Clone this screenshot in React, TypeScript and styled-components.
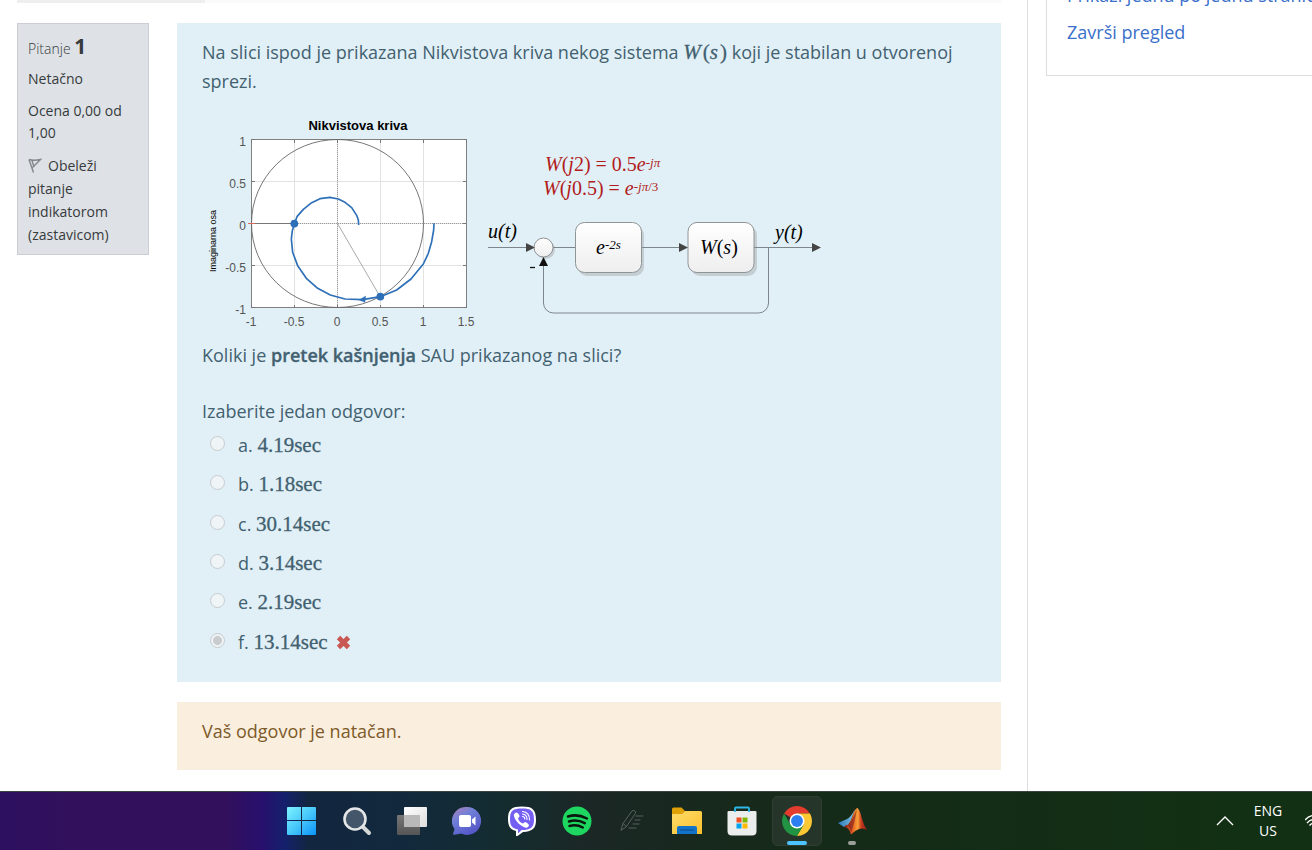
import React from "react";
import styled, { createGlobalStyle } from "styled-components";

const GlobalStyle = createGlobalStyle`
  *, *::before, *::after { box-sizing: border-box; }
  body { margin: 0; background: #fff; }
`;

const sans = `"Open Sans", "Noto Sans", sans-serif`;

const Screen = styled.div`
  display: flex;
  flex-direction: column;
  height: 100vh;
  overflow: hidden;
  font-family: ${sans};
  font-size: 18px;
  line-height: 29px;
`;

const Page = styled.div`
  display: flex;
  flex: 1;
  min-height: 0;
  overflow: hidden;
`;

const Main = styled.main`
  flex: 1;
  min-width: 0;
  padding: 0 26px 0 17px;
`;

const ProgressStrip = styled.div`
  display: flex;
  height: 3px;
  margin-bottom: 20px;
  background: #fafafa;
`;

const ProgressPart = styled.div`
  width: 188px;
  background: #eee;
`;

const Question = styled.section`
  display: flex;
  align-items: flex-start;
  gap: 28px;
`;

const Info = styled.aside`
  flex: none;
  width: 132px;
  padding: 11px 10px 8px;
  border: 1px solid #cacdd3;
  background: #dee2e6;
  color: #373a3c;
  font-size: 14px;
  line-height: 23px;
`;

const InfoTitle = styled.h3`
  margin: 0 0 8px;
  font-size: 14px;
  font-weight: 300;
  line-height: 23px;
`;

const InfoNumber = styled.span`
  font-size: 21px;
  font-weight: 700;
`;

const InfoText = styled.p`
  margin: 0 0 10px;
  line-height: 22px;
`;

const FlagLink = styled.a`
  color: inherit;
  text-decoration: none;

  svg { margin-right: 6px; vertical-align: -2px; }
`;

const Content = styled.div`
  flex: 1;
  min-width: 0;
`;

const Formulation = styled.form`
  margin-bottom: 20px;
  padding: 15px 25px 20px;
  background: #e1f0f7;
  color: #426170;
`;

const Paragraph = styled.p`
  margin: 0;
`;

const Strong = styled.b`
  font-weight: 600;
  -webkit-text-stroke: 0.3px currentColor;
`;

const Figure = styled.figure`
  margin: 19px 0 11px;
  svg { display: block; }
`;

const Answers = styled.fieldset`
  margin: 27px 0 0;
  padding: 0;
  border: 0;
`;

const Prompt = styled.legend`
  padding: 0;
`;

const AnswerList = styled.div`
  display: grid;
  grid-auto-rows: 1fr;
  min-height: 236px;
`;

const Answer = styled.label`
  display: flex;
  align-items: center;
  padding-left: 8px;
  white-space: pre;
  svg { margin-left: 8px; }
`;

const Radio = styled.input`
  appearance: none;
  width: 15px;
  height: 15px;
  margin: 0 13px 4px 0;
  border: 1px solid #c6cbce;
  border-radius: 50%;
  background: #eff4f7;

  &:checked {
    background: radial-gradient(circle, #c8cccf 0 4px, #eff4f7 5px);
  }
`;

const Digits = styled.span`
  font-family: "Liberation Serif", serif;
  font-size: 21px;
  -webkit-text-stroke: 0.3px currentColor;
`;

const MathText = styled.span`
  font-family: "Liberation Serif", serif;
  font-size: 21px;
  line-height: 1;
  -webkit-text-stroke: 0.3px currentColor;

  i { margin-right: 2px; }
`;

const Feedback = styled.div`
  min-height: 68px;
  padding: 15px 25px;
  background: #faeede;
  color: #7d5a29;
`;

const Side = styled.aside`
  flex: none;
  width: 285px;
  padding-left: 18px;
  overflow: hidden;
  border-left: 1px solid #dcdddf;
`;

const SideBlock = styled.nav`
  display: flex;
  flex-direction: column;
  gap: 8px;
  width: 300px;
  margin-top: -41px;
  padding: 21px 20px 28px;
  border: 1px solid #dcdddf;
  white-space: nowrap;
`;

const SideLink = styled.a`
  color: #3a6fca;
  text-decoration: none;
`;

const Taskbar = styled.footer`
  display: flex;
  flex: none;
  align-items: center;
  justify-content: space-between;
  height: 59px;
  padding-left: 277px;
  border-top: 1px solid #3c463f;
  background: linear-gradient(
    to right,
    #2d1060 0, #32105c 80px, #32105c 225px, #28106e 262px, #14206c 285px,
    #12263f 308px, #12293d 400px, #142c30 500px, #1b2725 590px,
    #17291c 720px, #142c17 900px, #123013 1250px
  );
`;

const Apps = styled.div`
  display: flex;
  gap: 5px;
`;

const AppButton = styled.button<{ $active?: boolean }>`
  display: grid;
  place-items: center;
  position: relative;
  width: 50px;
  height: 50px;
  padding: 0;
  border: 1px solid ${(p) => (p.$active ? "#2f3d31" : "transparent")};
  border-radius: 5px;
  background: ${(p) => (p.$active ? "#263529" : "transparent")};
`;

const Indicator = styled.span<{ $wide?: boolean }>`
  position: absolute;
  bottom: 0;
  left: calc(50% - ${(p) => (p.$wide ? 10 : 4)}px);
  width: ${(p) => (p.$wide ? 20 : 8)}px;
  height: 4px;
  border-radius: 2px;
  background: ${(p) => (p.$wide ? "#4cc2ff" : "#9a9f98")};
`;

const Tray = styled.div`
  display: flex;
  align-items: center;
  color: #fff;
`;

const TrayButton = styled.button`
  display: grid;
  place-items: center;
  padding: 0;
  border: 0;
  background: none;
  color: inherit;
  font-family: ${sans};
  font-size: 14px;
  line-height: 20px;
`;

const Language = styled(TrayButton)`
  width: 34px;
  margin: 0 20px 0 17px;
`;

const Axis = styled.text`
  fill: #555;
  font-family: "Liberation Sans", sans-serif;
  font-size: 12px;
`;

const Formula = styled.text`
  font-family: "Liberation Serif", serif;
  font-size: 20px;
`;

const xTicks: [number, string][] = [[251, "-1"], [294, "-0.5"], [337, "0"], [380, "0.5"], [423, "1"], [466, "1.5"]];
const yTicks: [number, string][] = [[140, "1"], [182, "0.5"], [224, "0"], [266, "-0.5"], [308, "-1"]];

function Diagram() {
  return (
    <svg width="625" height="215" viewBox="202 115 625 215" role="img" aria-label="Nikvistova kriva i blok dijagram">
      <defs>
        <linearGradient id="block" x1="0" y1="0" x2="0" y2="1">
          <stop offset="0" stopColor="#fff" />
          <stop offset="1" stopColor="#eee" />
        </linearGradient>
      </defs>

      <text x="358" y="130" textAnchor="middle" fontFamily="Liberation Sans, sans-serif" fontSize="13" fontWeight="700">Nikvistova kriva</text>
      <text transform="translate(216 241) rotate(-90)" textAnchor="middle" fontFamily="Liberation Sans, sans-serif" fontSize="9">Imaginarna osa</text>
      <rect x="251.500" y="139.500" width="215" height="168" fill="#fff" />
      <g stroke="#e2e2e2">
        {xTicks.slice(1, 5).map(([x]) => <path key={x} d={`M${x + 0.5} 140V308`} />)}
        {yTicks.slice(1, 4).map(([y]) => <path key={y} d={`M252 ${y - 0.5}H466`} />)}
      </g>
      <g stroke="#999" strokeDasharray="1 1">
        <path d="M337.500 140V308" />
        <path d="M252 223.500H466" />
      </g>
      <rect x="251.500" y="139.500" width="215" height="168" fill="none" stroke="#808080" />
      <g stroke="#777">
        {xTicks.map(([x]) => <path key={x} d={`M${x + 0.5} 140v3M${x + 0.5} 308v-3`} />)}
        {yTicks.map(([y]) => <path key={y} d={`M252 ${y - 0.5}h3M466 ${y - 0.5}h-3`} />)}
      </g>
      <ellipse cx="337.500" cy="223.500" rx="86" ry="84" fill="none" stroke="#666" strokeWidth="0.9" />
      <path d="M252 223.500H294" stroke="#777" />
      <path d="M248 223.500h7" stroke="#e0685f" />
      <path d="M337.500 223.500L380 296.500" stroke="#aaa" />
      <g transform="translate(195 110) scale(0.33333)">
        <path
          d="M491 345L490 330L485 316L470 293L450 277L430 267L405 262L375 266L350 278L325 298L306 320L298 342L292 362L289 387L293 427L308 467L334 505L368 535L406 555L450 567L503 569L556 560L605 540L648 507L685 462L700 430L710 395L716 360L717 340"
          fill="none" stroke="#2e70b8" strokeWidth="5" strokeLinejoin="round"
        />
        <path d="M492 570L512 558L510 577Z" fill="#2e70b8" stroke="#2e70b8" />
        <circle cx="298" cy="341" r="11.500" fill="#2e70b8" />
        <circle cx="556" cy="560" r="11.500" fill="#2e70b8" />
      </g>
      {xTicks.map(([x, t]) => <Axis key={x} x={x} y="326" textAnchor="middle">{t}</Axis>)}
      {yTicks.map(([y, t]) => <Axis key={y} x="246" y={y + 6} textAnchor="end">{t}</Axis>)}

      <g fill="#b11c1c">
        <Formula x="545" y="171"><tspan fontStyle="italic">W</tspan>(<tspan fontStyle="italic">j</tspan>2) = 0.5<tspan fontStyle="italic">e</tspan><tspan fontStyle="italic" fontSize="13" dy="-4">-jπ</tspan></Formula>
        <Formula x="543" y="195"><tspan fontStyle="italic">W</tspan>(<tspan fontStyle="italic">j</tspan>0.5) = <tspan fontStyle="italic">e</tspan><tspan fontSize="13" dy="-4" fontStyle="italic">-jπ</tspan><tspan fontSize="13">/3</tspan></Formula>
      </g>

      <g fill="#c5ced3">
        <rect x="578" y="226" width="66" height="50" rx="9" />
        <rect x="691" y="226" width="66" height="50" rx="9" />
        <circle cx="545.500" cy="249.500" r="9.500" />
      </g>
      <g stroke="#7d868b" fill="none">
        <path d="M488 247.500H528M553 247.500H576M641 247.500H682M754 247.500H814" />
        <path d="M768.500 247.500V303a10 10 0 0 1-10 10H553.500a10 10 0 0 1-10-10V264" />
      </g>
      <g fill="url(#block)" stroke="#8f9497">
        <rect x="575.500" y="222.500" width="66" height="50" rx="9" />
        <rect x="688" y="222.500" width="66" height="50" rx="9" />
        <circle cx="543.500" cy="247.500" r="9.500" />
      </g>
      <g fill="#444">
        <path d="M526 243l9 4.500l-9 4.500ZM679 243l9 4.500l-9 4.500ZM812 243l9 4.500l-9 4.500Z" />
        <path d="M539 266l4.500-9l4.500 9Z" fill="#111" />
      </g>
      <path d="M530 267.500h5" stroke="#111" strokeWidth="1.300" />
      <Formula x="488" y="238" fontStyle="italic">u(t)</Formula>
      <Formula x="775" y="239" fontStyle="italic">y(t)</Formula>
      <Formula x="596" y="254" fontStyle="italic">e<tspan fontSize="13" dy="-5">-2s</tspan></Formula>
      <Formula x="700" y="254"><tspan fontStyle="italic">W</tspan>(<tspan fontStyle="italic">s</tspan>)</Formula>
    </svg>
  );
}

function StartIcon() {
  return (
    <svg width="30" height="30" viewBox="0 0 30 30" aria-hidden="true">
      <defs><linearGradient id="win" x1="0" y1="0" x2="1" y2="1"><stop stopColor="#7df4ff" /><stop offset="0.500" stopColor="#48c8fa" /><stop offset="1" stopColor="#0a93fa" /></linearGradient></defs>
      <path d="M1 1H14V14H0V2a1 1 0 0 1 1-1ZM15 1H28a1 1 0 0 1 1 1V14H15ZM0 15H14V29H1a1 1 0 0 1-1-1ZM15 15H29V28a1 1 0 0 1-1 1H15Z" fill="url(#win)" />
    </svg>
  );
}

function SearchIcon() {
  return (
    <svg width="30" height="30" viewBox="0 0 30 30" aria-hidden="true">
      <path d="M21 21L27 27" stroke="#d5d6d8" strokeWidth="4" strokeLinecap="round" />
      <circle cx="13" cy="13" r="10.500" fill="#44566a" stroke="#e5e6e7" strokeWidth="2.600" />
    </svg>
  );
}

function TaskViewIcon() {
  return (
    <svg width="32" height="30" viewBox="0 0 32 30" aria-hidden="true">
      <defs>
        <linearGradient id="tvb" x1="0" y1="0" x2="0" y2="1"><stop stopColor="#777" /><stop offset="1" stopColor="#555" /></linearGradient>
        <linearGradient id="tvf" x1="0" y1="0" x2="1" y2="1"><stop stopColor="#fff" /><stop offset="1" stopColor="#ddd" /></linearGradient>
      </defs>
      <rect x="1" y="9" width="23" height="20" rx="1" fill="url(#tvb)" />
      <rect x="8" y="1" width="23" height="20" rx="1" fill="url(#tvf)" />
      <path d="M8 9H24V21H8Z" fill="#b9b9b9" />
    </svg>
  );
}

function ChatIcon() {
  return (
    <svg width="30" height="30" viewBox="0 0 30 30" aria-hidden="true">
      <defs><linearGradient id="chat" x1="0" y1="0" x2="0.600" y2="1"><stop stopColor="#b481b4" /><stop offset="0.400" stopColor="#7080d8" /><stop offset="1" stopColor="#5457c8" /></linearGradient></defs>
      <path d="M15 1a14 14 0 1 1-6 26.600C6 28.500 3 29 1.500 28.700C.5 28.400 1.500 27 2.500 23A14 14 0 0 1 15 1Z" fill="url(#chat)" />
      <rect x="7" y="9" width="12" height="12" rx="2" fill="#fff" />
      <path d="M20 13.500L23.500 10.500V19.500L20 16.500Z" fill="#fff" />
    </svg>
  );
}

function ViberIcon() {
  return (
    <svg width="30" height="30" viewBox="0 0 30 30" aria-hidden="true">
      <path d="M15 .5C25 .5 29 3 29 14C29 22 26 25.500 16 26L10.500 30H9V25C3 23.500 1 20 1 13C1 3 5 .5 15 .5Z" fill="#fff" />
      <path d="M15 2.500C24 2.500 27 4.500 27 13.500C27 21.500 24 24 14.500 24L11 27.500V23.500C5 22.500 3 19.500 3 13C3 4.500 6 2.500 15 2.500Z" fill="#7360f2" />
      <path d="M9 6.500C11 6.300 12.800 9.500 12.500 10.500L11 12.500C11.800 15 13.500 16.800 16 17.500L18 16C20 16.300 22 18.300 22 19.500C21 21.500 19.500 22.200 18 21.500C12 19 8 14.500 6.800 9.500C6.800 8 8 7 9 6.500Z" fill="#fff" />
      <path d="M15.500 5.500Q22.500 6 22.500 14M15.500 8Q20 8.500 20 13.500M15.500 10.500Q17.800 10.800 17.800 13" fill="none" stroke="#fff" strokeWidth="1.100" strokeLinecap="round" />
    </svg>
  );
}

function SpotifyIcon() {
  return (
    <svg width="30" height="30" viewBox="0 0 30 30" aria-hidden="true">
      <circle cx="15" cy="15" r="14.500" fill="#1ed760" />
      <path d="M6 10.500Q15.500 7.500 25 12.500M7 15.500Q15 13 22.800 17.200M7.500 20Q14.500 18 20.800 21.500" fill="none" stroke="#0b160e" strokeWidth="2.500" strokeLinecap="round" />
    </svg>
  );
}

function PenIcon() {
  return (
    <svg width="26" height="24" viewBox="0 0 26 24" fill="none" stroke="#596060" strokeLinecap="round" strokeLinejoin="round" aria-hidden="true">
      <path d="M2 21L4 14.500L13 2Q14 .8 15.700 1.800Q17.200 3 16.300 4.500L7.500 17.500ZM4 14.500L7.500 17.500M17 7H24M16 11H21M14 15H20M10 19H17" />
    </svg>
  );
}

function FolderIcon() {
  return (
    <svg width="30" height="28" viewBox="0 0 30 28" aria-hidden="true">
      <defs><linearGradient id="folder" x1="0" y1="0" x2="1" y2="1"><stop stopColor="#ffdc6a" /><stop offset="1" stopColor="#fbc02d" /></linearGradient></defs>
      <path d="M0 2a1.500 1.500 0 0 1 1.500-1.500H9.500L13 4H28V9H0Z" fill="#e0a008" />
      <path d="M0 7H10L13.500 4H28.500A1.500 1.500 0 0 1 30 5.500V27H0Z" fill="url(#folder)" />
      <path d="M5 27V21a2 2 0 0 1 2-2H23a2 2 0 0 1 2 2V27Z" fill="#1273c8" />
      <path d="M8.500 23H21.500" stroke="#0b4d86" strokeLinecap="round" />
    </svg>
  );
}

function StoreIcon() {
  return (
    <svg width="30" height="30" viewBox="0 0 30 30" aria-hidden="true">
      <path d="M.5 6Q.5 5 2 5H28Q29.500 5 29.500 6V25Q29.500 29.500 25 29.500H5Q.5 29.500 .5 25Z" fill="#eceded" />
      <path d="M8 6V2.500Q8 1.500 9 1.500H21Q22 1.500 22 2.500V6" fill="none" stroke="#2fb8ea" strokeWidth="1.800" />
      <path d="M9.500 11.500h5v5h-5Z" fill="#f25022" />
      <path d="M15.500 11.500h5v5h-5Z" fill="#7fba00" />
      <path d="M9.500 17.500h5v5h-5Z" fill="#00a4ef" />
      <path d="M15.500 17.500h5v5h-5Z" fill="#ffb900" />
    </svg>
  );
}

function ChromeIcon() {
  return (
    <svg width="30" height="30" viewBox="0 0 48 48" aria-hidden="true">
      <path d="M24 24L3.220 12A24 24 0 0 1 44.780 12H24Z" fill="#e33b2e" />
      <path d="M24 12H44.780A24 24 0 0 1 24 48L34.390 30Z" fill="#fcc934" />
      <path d="M3.220 12A24 24 0 0 0 24 48L34.390 30L24 24L13.610 30Z" fill="#229342" />
      <circle cx="24" cy="24" r="12" fill="#fff" />
      <circle cx="24" cy="24" r="9.500" fill="#2b7ff0" />
    </svg>
  );
}

function MatlabIcon() {
  return (
    <svg width="30" height="28" viewBox="0 0 30 28" aria-hidden="true">
      <defs>
        <linearGradient id="flame" x1="0" y1="0" x2="1" y2="0"><stop stopColor="#7a1f1c" /><stop offset="0.350" stopColor="#e2591f" /><stop offset="0.600" stopColor="#f8a23a" /><stop offset="0.750" stopColor="#c93a1e" /><stop offset="1" stopColor="#8c1d18" /></linearGradient>
        <linearGradient id="sheet" x1="0" y1="0" x2="1" y2="0"><stop stopColor="#2c78b8" /><stop offset="1" stopColor="#7fc5e4" /></linearGradient>
      </defs>
      <path d="M1 16L10 12Q14 10 18 2L12 19L7 20Z" fill="url(#sheet)" />
      <path d="M7 20Q9 17 11 18Q15 12 17 5Q19 1 20.500 1Q23 3 25 12Q27 19 30 23Q26 20.500 22 22Q17 24 14 27.500Q12 20 7 20Z" fill="url(#flame)" />
      <path d="M11 18Q16 12 20 2Q18 15 14 26Q13 20 11 18Z" fill="#7a2020" opacity="0.600" />
    </svg>
  );
}

const apps = [
  { name: "Start", Icon: StartIcon },
  { name: "Search", Icon: SearchIcon },
  { name: "Task view", Icon: TaskViewIcon },
  { name: "Chat", Icon: ChatIcon },
  { name: "Viber", Icon: ViberIcon },
  { name: "Spotify", Icon: SpotifyIcon },
  { name: "Pen", Icon: PenIcon },
  { name: "File Explorer", Icon: FolderIcon },
  { name: "Microsoft Store", Icon: StoreIcon },
  { name: "Chrome", Icon: ChromeIcon, active: true },
  { name: "MATLAB", Icon: MatlabIcon, open: true },
];

const answers = [
  ["a", "4.19sec"],
  ["b", "1.18sec"],
  ["c", "30.14sec"],
  ["d", "3.14sec"],
  ["e", "2.19sec"],
  ["f", "13.14sec"],
];

export default function App() {
  return (
    <Screen>
      <GlobalStyle />
      <Page>
        <Main>
          <ProgressStrip><ProgressPart /></ProgressStrip>
          <Question>
            <Info>
              <InfoTitle>Pitanje <InfoNumber>1</InfoNumber></InfoTitle>
              <InfoText>Netačno</InfoText>
              <InfoText>Ocena 0,00 od 1,00</InfoText>
              <FlagLink href="#flag">
                <svg width="14" height="15" viewBox="0 0 14 15" fill="none" stroke="#83878b" strokeWidth="1.400" aria-hidden="true">
                  <path d="M1 1.500L5.500 14.500M1 1.500Q6 3 12.500 1.500Q9 5 4.500 9.500M4 2.500L6 9" />
                </svg>
                Obeleži pitanje indikatorom (zastavicom)
              </FlagLink>
            </Info>
            <Content>
              <Formulation>
                <Paragraph>
                  Na slici ispod je prikazana Nikvistova kriva nekog sistema{" "}
                  <MathText><i>W</i>(<i>s</i>)</MathText> koji je stabilan u otvorenoj sprezi.
                </Paragraph>
                <Figure><Diagram /></Figure>
                <Paragraph>Koliki je <Strong>pretek kašnjenja</Strong> SAU prikazanog na slici?</Paragraph>
                <Answers>
                  <Prompt>Izaberite jedan odgovor:</Prompt>
                  <AnswerList>
                    {answers.map(([key, value]) => (
                      <Answer key={key}>
                        <Radio type="radio" name="answer" value={key} defaultChecked={key === "f"} disabled />
                        <span>{key}. <Digits>{value}</Digits></span>
                        {key === "f" && (
                          <svg width="15" height="15" viewBox="0 0 15 15" role="img" aria-label="Netačno">
                            <path d="M2.500 2.500L12.500 12.500M12.500 2.500L2.500 12.500" stroke="#ca5852" strokeWidth="4.800" />
                          </svg>
                        )}
                      </Answer>
                    ))}
                  </AnswerList>
                </Answers>
              </Formulation>
              <Feedback>Vaš odgovor je natačan.</Feedback>
            </Content>
          </Question>
        </Main>
        <Side>
          <SideBlock>
            <SideLink href="#pages">Prikaži jednu po jednu stranicu</SideLink>
            <SideLink href="#finish">Završi pregled</SideLink>
          </SideBlock>
        </Side>
      </Page>
      <Taskbar>
        <Apps>
          {apps.map(({ name, Icon, active, open }) => (
            <AppButton key={name} aria-label={name} $active={active}>
              <Icon />
              {(active || open) && <Indicator $wide={active} />}
            </AppButton>
          ))}
        </Apps>
        <Tray>
          <TrayButton aria-label="Show hidden icons">
            <svg width="18" height="10" viewBox="0 0 18 10" fill="none" stroke="#fff" strokeWidth="1.300" aria-hidden="true"><path d="M1 9L9 1L17 9" /></svg>
          </TrayButton>
          <Language><span>ENG</span><span>US</span></Language>
          <TrayButton aria-label="Network">
            <svg width="7" height="14" viewBox="0 0 7 14" fill="none" stroke="#fff" strokeWidth="1.300" aria-hidden="true"><path d="M0 6Q4 1.500 9 1.500M2 9Q5 5.500 9 5.500M4.500 11.500Q6.500 9 9 9" /></svg>
          </TrayButton>
        </Tray>
      </Taskbar>
    </Screen>
  );
}
